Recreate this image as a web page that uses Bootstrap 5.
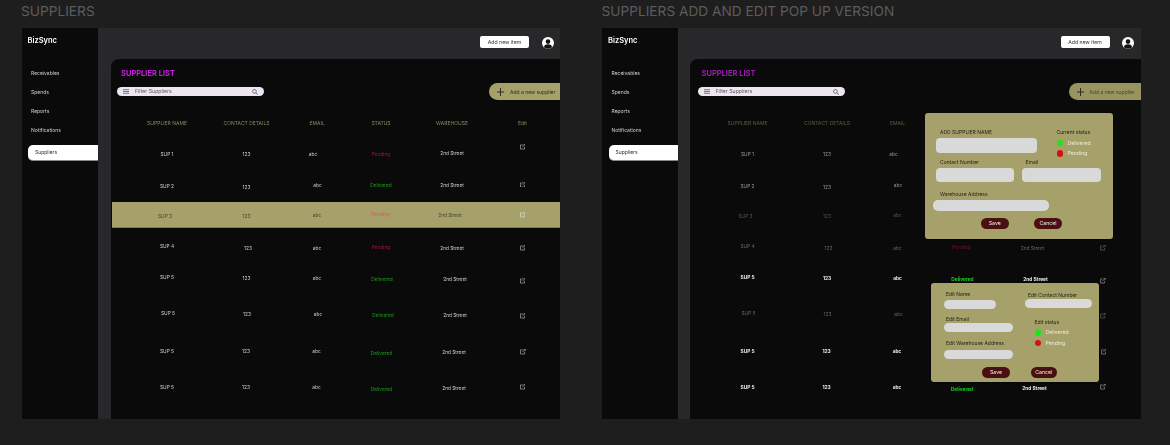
<!DOCTYPE html>
<html lang="en"><head><meta charset="utf-8"><title>Suppliers</title>
<link href="https://cdn.jsdelivr.net/npm/bootstrap@5.3.0/dist/css/bootstrap.min.css" rel="stylesheet">
<style>
html,body{height:445px;overflow:hidden}
body{background:#1e1e1e;font-family:Inter,"Liberation Sans",sans-serif;font-size:5px;line-height:8px;color:#ddd;padding-left:21.5px}
.board{width:538.5px;flex:none}
.board+.board{margin-left:42px}
.board-title{height:28px;margin:0 0 0 -.5px;font-size:13.7px;line-height:22px;font-weight:400;color:#5c5c5c;white-space:nowrap}
.screen{height:390.5px;background:#28282a;filter:blur(.25px)}
.side{width:76px;flex:none;background:#0a0a0b;color:#ddd}
.brand{font-size:7.5px;font-weight:600;color:#fff;line-height:10px;padding:8px 0 0 6px;height:41px}
.side-link{display:block;line-height:8px;padding-left:9.5px;margin-bottom:11px;color:#cfcfcf;text-decoration:none;font-size:5px}
.side-on{background:#fff;color:#333;margin:2px 0 0 6.5px;padding:3px 0 0 7px;height:16px;border-radius:5px 0 0 5px;border-bottom:.5px solid #888}
.work{flex:1;min-width:0;padding-left:13.5px}
.work-alt{padding-left:12px}
.topbar{height:31px;padding:8px 6.5px 0 0}
.new-btn{width:49px;height:11.5px;background:#fff;border-radius:2px;color:#333;line-height:12px;text-align:center;font-size:5.2px}
.avatar{width:12px;height:12px;margin:1px 0 0 12.5px}
.panel{height:360px;background:#0a0a0b;border-top-left-radius:8px;padding-top:9.5px;position:relative}
.list-title{font-size:7.5px;line-height:10px;font-weight:700;color:#c81ee0;margin:0 0 4.5px 10px}
.tool{height:17px;margin-bottom:19px}
.search{width:147px;height:8.5px;margin-left:6px;background:#ece6f0;border-radius:5px;color:#5c5866;line-height:8.5px;font-size:5.2px;padding:0 6px}
.search span{margin-left:6px}
.search svg{flex:none}
.add-btn{width:71px;height:17px;background:#a6a16a;border-radius:9px 0 0 9px;color:#2d2c1a;font-size:5px;padding-left:8px}
.add-btn span{margin-left:6px}
.grid6{display:grid;grid-template-columns:110px 49px 92px 36px 106px 35px;margin-left:1px;align-items:start;justify-items:center}
.head{height:24px;color:#8d8958;font-size:5px}
.rw{color:#cfcfcf;white-space:nowrap;font-size:4.8px}
.rw>*{display:block;line-height:8px}
.r1{height:32px}.r2{height:27px}.r3{height:25.5px;background:#a6a16a;border-bottom:.7px solid #7f7c4f;color:#45442c}
.r4{height:30px}.r5{height:43px}.r6,.r7{height:36px}.r8{height:46px}
.r3 .pend{color:#d85a5a}.r3 svg{stroke:#e6e6d8}
.pend{color:#a8123f}.deliv{color:#1aa01a}
.ic{width:5.5px;height:5.5px;fill:none;stroke:#b8b8b8;stroke-width:.7}
.t1{margin-top:1px}.t6{margin-top:6px}.t65{margin-top:6.5px}.t7{margin-top:7px}.t8{margin-top:8px}.t85{margin-top:8.5px}.t9{margin-top:9px}.t95{margin-top:9.5px}
.t10{margin-top:10px}.t105{margin-top:10.5px}.t11{margin-top:11.5px}.t12{margin-top:12px}.t125{margin-top:12.5px}.t145{margin-top:14.5px}
.t155{margin-top:15.5px}.t16{margin-top:16px}.t165{margin-top:16.5px}.t175{margin-top:17.5px}.t205{margin-top:20.5px}
.l1{margin-left:1px}.l2{margin-left:2px}.l3{margin-left:3px}.l4{margin-left:4px}.l6{margin-left:6px}
.m1{margin-right:1px}.m4{margin-right:4px}.m8{margin-right:8px}
/* pop-up version */
.soft{filter:blur(.45px)}
.soft .grid6{margin-left:2.5px}
.soft .list-title{color:#9c1ab2;margin-left:11.5px}
.soft .search{margin-left:7.5px}
.soft .add-btn{width:72px}
.soft .head{color:#5f5d3c}
.soft .add-btn{background:#99945f;color:#4a4830}
.soft .rw{color:#666}
.soft .r1,.soft .r2{color:#999}
.soft .r3{background:none;border-color:transparent;color:#555}
.soft .r3 .pend,.soft .pend{color:#7c0f30}
.soft .r3 svg,.soft .rw svg{stroke:#666}
.soft .deliv{color:#128012}
.soft .loud{color:#eee;font-weight:700}
.soft .loud .deliv{color:#19d019}
.soft .loud svg{stroke:#999}
.popup{position:absolute;background:#a6a16a;border-radius:3px;color:#24231a;box-shadow:0 .5px 1px #0006}
.pop-add{left:235px;top:54px;width:188px;height:126px;padding-top:14.5px}
.pop-edit{left:241px;top:224px;width:168px;height:99px;padding-top:7px}
.field{display:block;background:#d9d9d9;border:0;padding:0}
.lab{line-height:8px;white-space:nowrap}
.dot{width:6.5px;height:6.5px;border-radius:50%;flex:none;margin-right:4.5px}
.dot-g{background:#19e619}.dot-r{background:#d90f0f}
.stat{color:#ece9d2;height:10.5px;font-size:5.2px}
.pill{height:11px;background:#4a1010;color:#eee;border-radius:6px;line-height:11px;text-align:center;flex:none;font-size:5.2px}
.pa-main{margin-left:10.5px;width:101.5px}.pa-l1{margin-left:4.5px;margin-bottom:2.5px}.pa-f1{height:14.5px;border-radius:4px}
.pa-stat{margin-left:19.5px;width:50px;height:25px}.pa-s1{margin-top:2px}
.pa-row2{margin-top:5px;margin-left:10.5px}.pa-c1,.pa-c2{width:78.5px}.pa-c2{margin-left:8px}.pa-l2{margin-left:3.5px;margin-bottom:2.5px}.pa-f2{height:13.5px;border-radius:4px}
.pa-row3{margin-top:8px;margin-left:8px}.pa-l3{margin-left:7px;margin-bottom:2px}.pa-f3{width:116px;height:11px;border-radius:5px}
.pa-row4{margin-top:7px;margin-left:55.5px}.pa-save{width:28.5px}.pa-cancel{width:28px;margin-left:25px}
.pe-left{width:69px;margin-left:13px}.pe-lab{margin-left:2px}.pe-f{height:9px;border-radius:5px;width:69px}.pe-short{width:52px}
.pe-g2{margin-top:2px}.pe-g3{margin-top:3px}.pe-g6{margin-top:6px}.pe-g7{margin-top:7px}
.pe-right{margin-left:12px}.pe-lab2{margin-left:3px;margin-top:1px}.pe-wide{width:67px;height:9px;border-radius:5px}
.pe-stat{margin:10px 0 1px 9.5px}.pe-s{margin-left:9.5px}
.pe-row{margin-top:8px;margin-left:51px}.pe-save{width:28px}.pe-cancel{width:26.5px;margin-left:20.5px}
</style></head><body class="d-flex">

<section class="board">
<h2 class="board-title">SUPPLIERS</h2>
<div class="screen d-flex">
<nav class="side">
<div class="brand">BizSync</div>
<a class="side-link" href="#">Receivables</a><a class="side-link" href="#">Spends</a><a class="side-link" href="#">Reports</a><a class="side-link" href="#">Notifications</a>
<a class="side-link side-on" href="#">Suppliers</a>
</nav>
<div class="work">
<div class="topbar d-flex justify-content-end">
<div class="new-btn">Add new item</div>
<svg class="avatar" viewBox="0 0 12 12"><circle cx="6" cy="6" r="6" fill="#fff"/><circle cx="6" cy="4.6" r="2.3" fill="#111"/><path d="M1.9 10.2c.4-2.3 2.2-2.9 4.1-2.9s3.7.6 4.1 2.9a6 6 0 0 1-8.2 0z" fill="#111"/></svg>
</div>
<main class="panel">
<div class="list-title">SUPPLIER LIST</div>
<div class="tool d-flex align-items-center">
<div class="search d-flex align-items-center"><svg width="6" height="5" viewBox="0 0 6 5"><path d="M0 .7h6M0 2.5h6M0 4.3h6" stroke="#49454f" stroke-width=".7"/></svg><span class="flex-grow-1">Filter Suppliers</span><svg width="6" height="6" viewBox="0 0 6 6" fill="none" stroke="#49454f" stroke-width=".7"><circle cx="2.4" cy="2.4" r="1.9"/><path d="M3.8 3.8L5.8 5.8"/></svg></div>
<div class="add-btn ms-auto d-flex align-items-center"><svg width="7" height="8" viewBox="0 0 7 8"><path d="M3.5 0v8M0 4h7" stroke="#222" stroke-width=".9"/></svg><span>Add a new supplier</span></div>
</div>
<div class="grid6 head"><span>SUPPLIER NAME</span><span>CONTACT DETAILS</span><span>EMAIL</span><span>STATUS</span><span>WAREHOUSE</span><span>Edit</span></div>
<div class="grid6 rw r1"><span class="t7">SUP 1</span><span class="t7">123</span><span class="t7 m8">abc</span><span class="t7 pend">Pending</span><span class="t6">2nd Street</span><svg class="ic t1" viewBox="0 0 6 6"><path d="M3 1H.5v4.500H5V3M2.500 3.500L5.700.3M3.800.3h1.900v1.900"/></svg></div>
<div class="grid6 rw r2"><span class="t65">SUP 2</span><span class="t8">123</span><span class="t6 l1">abc</span><span class="t6 deliv">Delivered</span><span class="t6">2nd Street</span><svg class="ic t65" viewBox="0 0 6 6"><path d="M3 1H.5v4.500H5V3M2.500 3.500L5.700.3M3.800.3h1.900v1.900"/></svg></div>
<div class="grid6 rw r3"><span class="t10 m4">SUP 3</span><span class="t10">123</span><span class="t85">abc</span><span class="t8 m1 pend">Pending</span><span class="t9 m4">2nd Street</span><svg class="ic t10" viewBox="0 0 6 6"><path d="M3 1H.5v4.500H5V3M2.500 3.500L5.700.3M3.800.3h1.900v1.900"/></svg></div>
<div class="grid6 rw r4"><span class="t145">SUP 4</span><span class="t16 l3">123</span><span class="t165">abc</span><span class="t155 pend">Pending</span><span class="t165">2nd Street</span><svg class="ic t175" viewBox="0 0 6 6"><path d="M3 1H.5v4.500H5V3M2.500 3.500L5.700.3M3.800.3h1.900v1.900"/></svg></div>
<div class="grid6 rw r5"><span class="t155">SUP 5</span><span class="t165">123</span><span class="t165">abc</span><span class="t175 l2 deliv">Delivered</span><span class="t175 l6">2nd Street</span><svg class="ic t205" viewBox="0 0 6 6"><path d="M3 1H.5v4.500H5V3M2.500 3.500L5.700.3M3.800.3h1.900v1.900"/></svg></div>
<div class="grid6 rw r6"><span class="t85 l2">SUP 5</span><span class="t95 l1">123</span><span class="t95 l2">abc</span><span class="t105 l4 deliv">Delivered</span><span class="t105 l6">2nd Street</span><svg class="ic t125" viewBox="0 0 6 6"><path d="M3 1H.5v4.500H5V3M2.500 3.500L5.700.3M3.800.3h1.900v1.900"/></svg></div>
<div class="grid6 rw r7"><span class="t105">SUP 5</span><span class="t105 m1">123</span><span class="t105 m1">abc</span><span class="t12 l1 deliv">Delivered</span><span class="t11 l4">2nd Street</span><svg class="ic t125 l1" viewBox="0 0 6 6"><path d="M3 1H.5v4.500H5V3M2.500 3.500L5.700.3M3.800.3h1.900v1.900"/></svg></div>
<div class="grid6 rw r8"><span class="t105">SUP 5</span><span class="t105 m1">123</span><span class="t105 m1">abc</span><span class="t12 l1 deliv">Delivered</span><span class="t11 l4">2nd Street</span><svg class="ic t11" viewBox="0 0 6 6"><path d="M3 1H.5v4.500H5V3M2.500 3.500L5.700.3M3.800.3h1.900v1.900"/></svg></div>
</main>
</div>
</div>
</section>

<section class="board">
<h2 class="board-title">SUPPLIERS ADD AND EDIT POP UP VERSION</h2>
<div class="screen d-flex soft">
<nav class="side">
<div class="brand">BizSync</div>
<a class="side-link" href="#">Receivables</a><a class="side-link" href="#">Spends</a><a class="side-link" href="#">Reports</a><a class="side-link" href="#">Notifications</a>
<a class="side-link side-on" href="#">Suppliers</a>
</nav>
<div class="work work-alt">
<div class="topbar d-flex justify-content-end">
<div class="new-btn">Add new item</div>
<svg class="avatar" viewBox="0 0 12 12"><circle cx="6" cy="6" r="6" fill="#fff"/><circle cx="6" cy="4.6" r="2.3" fill="#111"/><path d="M1.9 10.2c.4-2.3 2.2-2.9 4.1-2.9s3.7.6 4.1 2.9a6 6 0 0 1-8.2 0z" fill="#111"/></svg>
</div>
<main class="panel">
<div class="list-title">SUPPLIER LIST</div>
<div class="tool d-flex align-items-center">
<div class="search d-flex align-items-center"><svg width="6" height="5" viewBox="0 0 6 5"><path d="M0 .7h6M0 2.5h6M0 4.3h6" stroke="#49454f" stroke-width=".7"/></svg><span class="flex-grow-1">Filter Suppliers</span><svg width="6" height="6" viewBox="0 0 6 6" fill="none" stroke="#49454f" stroke-width=".7"><circle cx="2.4" cy="2.4" r="1.9"/><path d="M3.8 3.8L5.8 5.8"/></svg></div>
<div class="add-btn ms-auto d-flex align-items-center"><svg width="7" height="8" viewBox="0 0 7 8"><path d="M3.5 0v8M0 4h7" stroke="#222" stroke-width=".9"/></svg><span>Add a new supplier</span></div>
</div>
<div class="grid6 head"><span>SUPPLIER NAME</span><span>CONTACT DETAILS</span><span>EMAIL</span><span>STATUS</span><span>WAREHOUSE</span><span>Edit</span></div>
<div class="grid6 rw r1"><span class="t7">SUP 1</span><span class="t7">123</span><span class="t7 m8">abc</span><span class="t7 pend">Pending</span><span class="t6">2nd Street</span><svg class="ic t1" viewBox="0 0 6 6"><path d="M3 1H.5v4.500H5V3M2.500 3.500L5.700.3M3.800.3h1.900v1.900"/></svg></div>
<div class="grid6 rw r2"><span class="t65">SUP 2</span><span class="t8">123</span><span class="t6 l1">abc</span><span class="t6 deliv">Delivered</span><span class="t6">2nd Street</span><svg class="ic t65" viewBox="0 0 6 6"><path d="M3 1H.5v4.500H5V3M2.500 3.500L5.700.3M3.800.3h1.900v1.900"/></svg></div>
<div class="grid6 rw r3"><span class="t10 m4">SUP 3</span><span class="t10">123</span><span class="t85">abc</span><span class="t8 m1 pend">Pending</span><span class="t9 m4">2nd Street</span><svg class="ic t10" viewBox="0 0 6 6"><path d="M3 1H.5v4.500H5V3M2.500 3.500L5.700.3M3.800.3h1.900v1.900"/></svg></div>
<div class="grid6 rw r4"><span class="t145">SUP 4</span><span class="t16 l3">123</span><span class="t165">abc</span><span class="t155 pend">Pending</span><span class="t165">2nd Street</span><svg class="ic t175" viewBox="0 0 6 6"><path d="M3 1H.5v4.500H5V3M2.500 3.500L5.700.3M3.800.3h1.900v1.900"/></svg></div>
<div class="grid6 rw r5 loud"><span class="t155">SUP 5</span><span class="t165">123</span><span class="t165">abc</span><span class="t175 l2 deliv">Delivered</span><span class="t175 l6">2nd Street</span><svg class="ic t205" viewBox="0 0 6 6"><path d="M3 1H.5v4.500H5V3M2.500 3.500L5.700.3M3.800.3h1.900v1.900"/></svg></div>
<div class="grid6 rw r6"><span class="t85 l2">SUP 5</span><span class="t95 l1">123</span><span class="t95 l2">abc</span><span class="t105 l4 deliv">Delivered</span><span class="t105 l6">2nd Street</span><svg class="ic t125" viewBox="0 0 6 6"><path d="M3 1H.5v4.500H5V3M2.500 3.500L5.700.3M3.800.3h1.900v1.900"/></svg></div>
<div class="grid6 rw r7 loud"><span class="t105">SUP 5</span><span class="t105 m1">123</span><span class="t105 m1">abc</span><span class="t12 l1 deliv">Delivered</span><span class="t11 l4">2nd Street</span><svg class="ic t125 l1" viewBox="0 0 6 6"><path d="M3 1H.5v4.500H5V3M2.500 3.500L5.700.3M3.800.3h1.900v1.900"/></svg></div>
<div class="grid6 rw r8 loud"><span class="t105">SUP 5</span><span class="t105 m1">123</span><span class="t105 m1">abc</span><span class="t12 l1 deliv">Delivered</span><span class="t11 l4">2nd Street</span><svg class="ic t11" viewBox="0 0 6 6"><path d="M3 1H.5v4.500H5V3M2.500 3.500L5.700.3M3.800.3h1.900v1.900"/></svg></div>

<div class="popup pop-add">
<div class="d-flex">
<div class="pa-main"><div class="lab pa-l1">ADD SUPPLIER NAME</div><div class="field pa-f1"></div></div>
<div class="pa-stat"><div class="lab">Current status</div><div class="d-flex align-items-center stat pa-s1"><i class="dot dot-g"></i>Delivered</div><div class="d-flex align-items-center stat"><i class="dot dot-r"></i>Pending</div></div>
</div>
<div class="d-flex pa-row2">
<div class="pa-c1"><div class="lab pa-l1">Contact Number</div><div class="field pa-f2"></div></div>
<div class="pa-c2"><div class="lab pa-l2">Email</div><div class="field pa-f2"></div></div>
</div>
<div class="pa-row3"><div class="lab pa-l3">Warehouse Address</div><div class="field pa-f3"></div></div>
<div class="d-flex pa-row4"><div class="pill pa-save">Save</div><div class="pill pa-cancel">Cancel</div></div>
</div>

<div class="popup pop-edit">
<div class="d-flex">
<div class="pe-left">
<div class="lab pe-lab">Edit Name</div><div class="field pe-f pe-short pe-g2"></div>
<div class="lab pe-lab pe-g6">Edit Email</div><div class="field pe-f"></div>
<div class="lab pe-lab pe-g7">Edit Warehouse Address</div><div class="field pe-f pe-g3"></div>
</div>
<div class="pe-right">
<div class="lab pe-lab2">Edit Contact Number</div><div class="field pe-wide"></div>
<div class="lab pe-stat">Edit status</div>
<div class="d-flex align-items-center stat pe-s"><i class="dot dot-g"></i>Delivered</div>
<div class="d-flex align-items-center stat pe-s"><i class="dot dot-r"></i>Pending</div>
</div>
</div>
<div class="d-flex pe-row"><div class="pill pe-save">Save</div><div class="pill pe-cancel">Cancel</div></div>
</div>
</main>
</div>
</div>
</section>

<script src="https://cdn.jsdelivr.net/npm/bootstrap@5.3.0/dist/js/bootstrap.bundle.min.js"></script>
</body></html>
